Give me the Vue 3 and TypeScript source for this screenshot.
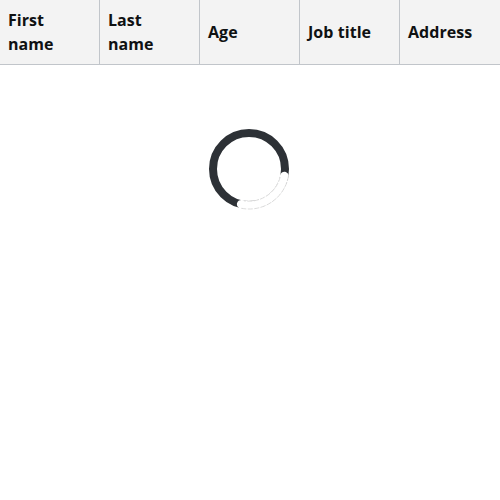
<script setup lang="ts">
const columns: string[] = ['First name', 'Last name', 'Age', 'Job title', 'Address']
</script>

<template>
  <div class="grid">
    <div class="header" role="row">
      <div v-for="column in columns" :key="column" class="cell" role="columnheader">{{ column }}</div>
    </div>
    <div class="body">
      <svg class="spinner" width="82" height="82" viewBox="0 0 82 82" role="progressbar">
        <circle class="ring" cx="41" cy="41" r="36" />
        <path class="arc" d="M76.3 48A36 36 0 0 1 33.2 76.2" />
        <path class="edge" d="M80.5 48A40 40 0 0 1 33 80.2M72.2 49A32.2 32.2 0 0 1 36 72.8" />
      </svg>
    </div>
  </div>
</template>

<style>
body {
  background: #fff;
}
</style>

<style scoped>
.grid {
  width: 500px;
  height: 500px;
  overflow: hidden;
  font-family: "Open Sans", sans-serif;
  color: #0f1112;
}
.header {
  display: grid;
  grid-template-columns: repeat(5, 100px);
  height: 65px;
  box-sizing: border-box;
  background: #f3f3f3;
  border-bottom: 1px solid #c1c5ca;
}
.cell {
  display: flex;
  align-items: center;
  padding: 0 8px;
  border-right: 1px solid #c1c5ca;
  font-size: 16px;
  font-weight: 700;
  line-height: 24px;
  letter-spacing: 0.06px;
}
.cell:last-child {
  border-right: 0;
}
.body {
  display: flex;
  justify-content: center;
  padding: 63px 2px 0 0;
}
.spinner {
  display: block;
}
.ring {
  fill: none;
  stroke: #2d3136;
  stroke-width: 8;
}
.edge {
  fill: none;
  stroke: #d4d4d4;
  stroke-width: 0.8;
  stroke-dasharray: 5 1.5;
}
.arc {
  fill: none;
  stroke: #fff;
  stroke-width: 8.6;
  stroke-linecap: round;
}
</style>
